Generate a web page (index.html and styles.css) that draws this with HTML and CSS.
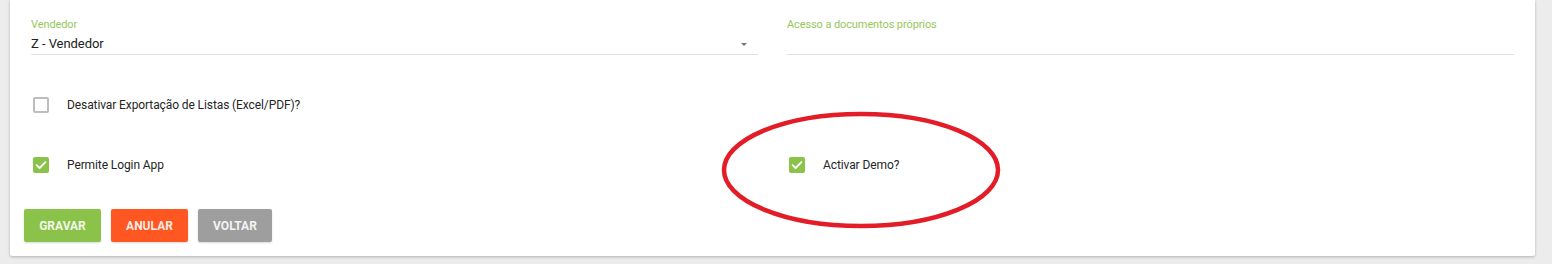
FILE: index.html
```html
<!DOCTYPE html>
<html lang="pt">
<head>
<meta charset="utf-8">
<link rel="stylesheet" href="styles.css">
</head>
<body>
<div class="page">
  <div class="card">
    <div class="grid">
      <div class="col">
        <div class="field">
          <label class="flabel">Vendedor</label>
          <div class="fvalue select">Z - Vendedor<span class="caret"></span></div>
        </div>
      </div>
      <div class="col">
        <div class="field">
          <label class="flabel">Acesso a documentos próprios</label>
          <div class="fvalue"></div>
        </div>
      </div>
      <div class="col row1">
        <div class="check"><span class="box"></span><span class="ctext">Desativar Exportação de Listas (Excel/PDF)?</span></div>
      </div>
      <div class="col row1"></div>
      <div class="col row2">
        <div class="check"><span class="box on"><svg viewBox="0 0 16 16" width="16" height="16"><path d="M3.6 8.2 L6.6 11 L12.4 5.2" fill="none" stroke="#fff" stroke-width="1.8" stroke-linecap="round" stroke-linejoin="round"/></svg></span><span class="ctext">Permite Login App</span></div>
      </div>
      <div class="col row2">
        <div class="check"><span class="box on"><svg viewBox="0 0 16 16" width="16" height="16"><path d="M3.6 8.2 L6.6 11 L12.4 5.2" fill="none" stroke="#fff" stroke-width="1.8" stroke-linecap="round" stroke-linejoin="round"/></svg></span><span class="ctext">Activar Demo?</span></div>
      </div>
    </div>
    <div class="actions">
      <button class="btn green">GRAVAR</button>
      <button class="btn orange">ANULAR</button>
      <button class="btn grey">VOLTAR</button>
    </div>
  </div>
  <svg class="annot" width="1552" height="264" viewBox="0 0 1552 264"><ellipse cx="861" cy="170" rx="137" ry="56" fill="none" stroke="#e21d27" stroke-width="4.5"/></svg>
</div>
</body>
</html>
```
FILE: styles.css
```css
* { box-sizing: border-box; }
html, body { margin: 0; padding: 0; }
body {
  background: #ececec;
  font-family: Roboto, "Noto Sans", Arial, sans-serif;
  color: #212121;
  width: 1552px;
  height: 264px;
  overflow: hidden;
}
.page { position: relative; height: 264px; }
.card {
  margin: 0 17px 0 10px;
  background: #fff;
  padding: 18px 14px 14px 14px;
  box-shadow: 0 1px 3px rgba(0,0,0,0.25);
  border-radius: 0 0 2px 2px;
}
.grid {
  display: grid;
  grid-template-columns: 1fr 1fr;
  column-gap: 15px;
}
.col { padding: 0 7px; }
.field { display: flex; flex-direction: column; }
.flabel {
  font-size: 11px;
  line-height: 14px;
  color: #8bc34a;
  opacity: 0.9;
  letter-spacing: -0.1px;
}
.fvalue {
  margin-top: 2px;
  height: 21px;
  font-size: 13px;
  line-height: 20px;
  border-bottom: 1px solid #e0e0e0;
  position: relative;
  letter-spacing: -0.05px;
}
.caret {
  position: absolute;
  right: 11px;
  top: 9px;
  width: 0; height: 0;
  border-left: 3px solid transparent;
  border-right: 3px solid transparent;
  border-top: 3px solid #757575;
}
.row1 { margin-top: 42px; }
.row2 { margin-top: 44px; }
.check {
  display: flex;
  align-items: center;
  height: 16px;
  padding-left: 2px;
}
.box {
  width: 16px; height: 16px;
  border: 2px solid #bdbdbd;
  border-radius: 2px;
  flex: none;
  display: flex;
}
.box.on { background: #8bc34a; border: none; }
.ctext {
  margin-left: 18px;
  font-size: 12px;
  line-height: 16px;
  color: #262626;
  letter-spacing: -0.1px;
}
.actions {
  display: flex;
  gap: 10px;
  margin-top: 36px;
}
.btn {
  height: 33px;
  padding: 0 14px;
  min-width: 74px;
  border: none;
  border-radius: 2px;
  font-family: Roboto, Arial, sans-serif;
  font-weight: 700;
  font-size: 12px;
  color: rgba(255,255,255,0.9);
  box-shadow: 0 1px 2px rgba(0,0,0,0.15);
}
.btn.green { background: #8bc34a; width: 77px; }
.btn.orange { background: #ff5722; width: 77px; }
.btn.grey { background: #9e9e9e; width: 74px; }
.annot { position: absolute; left: 0; top: 0; pointer-events: none; }
```
